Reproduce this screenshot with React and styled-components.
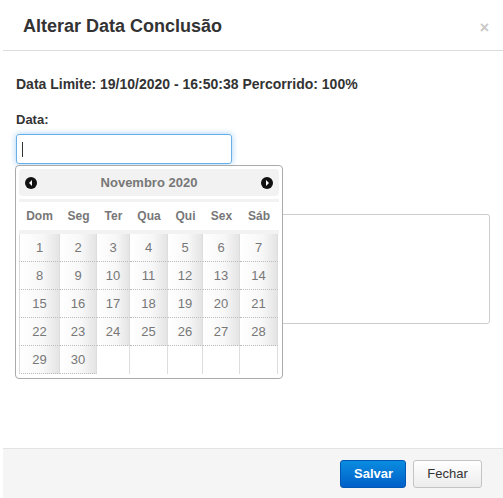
import React from 'react';
import styled, { createGlobalStyle } from 'styled-components';

const GlobalStyle = createGlobalStyle`
  html, body {
    margin: 0;
    padding: 0;
    background: #ffffff;
    font-family: "Liberation Sans", Arial, sans-serif;
    overflow: hidden;
  }
`;

const Modal = styled.div`
  position: relative;
  margin-left: 3px;
  width: 500px;
  height: 498px;
  background: #ffffff;
  display: flex;
  flex-direction: column;
`;

const Header = styled.div`
  height: 51px;
  box-sizing: border-box;
  border-bottom: 1px solid #dcdcdc;
  display: flex;
  align-items: center;
  justify-content: space-between;
  padding: 3px 14px 0 20px;
`;

const Title = styled.h3`
  margin: 0;
  font-size: 18px;
  font-weight: bold;
  color: #333333;
`;

const Close = styled.span`
  font-size: 16px;
  font-weight: bold;
  color: #c8c8c8;
  line-height: 1;
  margin-top: 2px;
`;

const Body = styled.div`
  flex: 1;
  padding: 25px 13px 0 13px;
  position: relative;
`;

const Info = styled.p`
  margin: 0 0 20px 0;
  font-size: 14px;
  font-weight: bold;
  color: #333333;
`;

const Label = styled.label`
  display: block;
  font-size: 13px;
  font-weight: bold;
  color: #333333;
  margin-top: 1px;
  margin-bottom: 7px;
`;

const Field = styled.div`
  position: relative;
`;

const Input = styled.div`
  width: 216px;
  height: 30px;
  box-sizing: border-box;
  border: 1px solid #66afe9;
  border-radius: 3px;
  box-shadow: 0 0 6px rgba(102, 175, 233, 0.6);
  display: flex;
  align-items: center;
  padding-left: 5px;
`;

const Caret = styled.span`
  width: 1px;
  height: 15px;
  background: #333;
`;

const Textarea = styled.div`
  margin-top: 50px;
  width: 474px;
  height: 110px;
  box-sizing: border-box;
  border: 1px solid #cccccc;
  border-radius: 3px;
`;

const Picker = styled.div`
  position: absolute;
  top: 31px;
  left: -1px;
  width: 268px;
  box-sizing: border-box;
  border: 1px solid #aaaaaa;
  border-radius: 4px;
  background: #ffffff;
  padding: 3px 3px 4px 3px;
`;

const PickerHead = styled.div`
  height: 27px;
  background: #f2f2f2;
  border-radius: 4px;
  display: flex;
  align-items: center;
  justify-content: space-between;
  padding: 0 6px;
`;

const Arrow = styled.span`
  width: 12px;
  height: 12px;
  border-radius: 50%;
  background: #111;
  display: flex;
  align-items: center;
  justify-content: center;
  &::after {
    content: '';
    width: 0;
    height: 0;
    border-top: 3px solid transparent;
    border-bottom: 3px solid transparent;
    ${({ $dir }) => ($dir === 'prev' ? 'border-right: 3px solid #fff; margin-left: -1px;' : 'border-left: 3px solid #fff; margin-left: 1px;')}
  }
`;

const MonthTitle = styled.span`
  font-size: 13px;
  font-weight: bold;
  color: #777777;
`;

const cols = '41px 37px 33px 38px 35px 37px 38px';

const WeekRow = styled.div`
  display: grid;
  grid-template-columns: ${cols};
  margin-top: 3px;
  border-top: 3px solid #f2f2f2;
  border-bottom: 4px solid #f2f2f2;
  height: 28px;
  align-items: center;
`;

const WeekDay = styled.span`
  text-align: center;
  font-size: 12px;
  font-weight: bold;
  color: #777777;
`;

const Grid = styled.div`
  display: grid;
  grid-template-columns: ${cols};
  grid-auto-rows: 28px;
`;

const Day = styled.span`
  display: flex;
  align-items: center;
  justify-content: center;
  font-size: 13px;
  color: #777777;
  box-sizing: border-box;
  border-right: 1px solid #dddddd;
  ${({ $empty }) =>
    $empty
      ? 'background: #ffffff;'
      : 'background: linear-gradient(to right, #ffffff 0%, #f7f7f7 60%, #e4e4e4 100%); border-bottom: 1px dotted #bbbbbb;'}
  ${({ $first }) => ($first ? 'border-left: 1px solid #dddddd;' : '')}
`;

const Footer = styled.div`
  height: 50px;
  box-sizing: border-box;
  background: #f5f5f5;
  border-top: 1px solid #e3e3e3;
  display: flex;
  align-items: center;
  justify-content: flex-end;
  gap: 7px;
  padding-right: 21px;
`;

const Button = styled.button`
  height: 28px;
  box-sizing: border-box;
  border-radius: 3px;
  font-family: "Liberation Sans", Arial, sans-serif;
  font-size: 13px;
  padding: 0 13px;
  cursor: pointer;
  ${({ $primary }) =>
    $primary
      ? 'background: linear-gradient(to bottom, #0a8ce0, #0060c8); border: 1px solid #0056b3; color: #fff; font-weight: bold; width: 66px;'
      : 'background: linear-gradient(to bottom, #ffffff, #ececec); border: 1px solid #c4c4c4; color: #333; width: 69px;'}
`;

const weekDays = ['Dom', 'Seg', 'Ter', 'Qua', 'Qui', 'Sex', 'Sáb'];

export default function App() {
  const cells = [];
  for (let i = 1; i <= 35; i++) cells.push(i <= 30 ? i : null);

  return (
    <>
      <GlobalStyle />
      <Modal>
        <Header>
          <Title>Alterar Data Conclusão</Title>
          <Close>×</Close>
        </Header>
        <Body>
          <Info>Data Limite: 19/10/2020 - 16:50:38 Percorrido: 100%</Info>
          <Label>Data:</Label>
          <Field>
            <Input>
              <Caret />
            </Input>
            <Textarea />
            <Picker>
              <PickerHead>
                <Arrow $dir="prev" />
                <MonthTitle>Novembro 2020</MonthTitle>
                <Arrow $dir="next" />
              </PickerHead>
              <WeekRow>
                {weekDays.map(d => (
                  <WeekDay key={d}>{d}</WeekDay>
                ))}
              </WeekRow>
              <Grid>
                {cells.map((d, i) => (
                  <Day key={i} $empty={!d} $first={i % 7 === 0}>
                    {d}
                  </Day>
                ))}
              </Grid>
            </Picker>
          </Field>
        </Body>
        <Footer>
          <Button $primary>Salvar</Button>
          <Button>Fechar</Button>
        </Footer>
      </Modal>
    </>
  );
}
